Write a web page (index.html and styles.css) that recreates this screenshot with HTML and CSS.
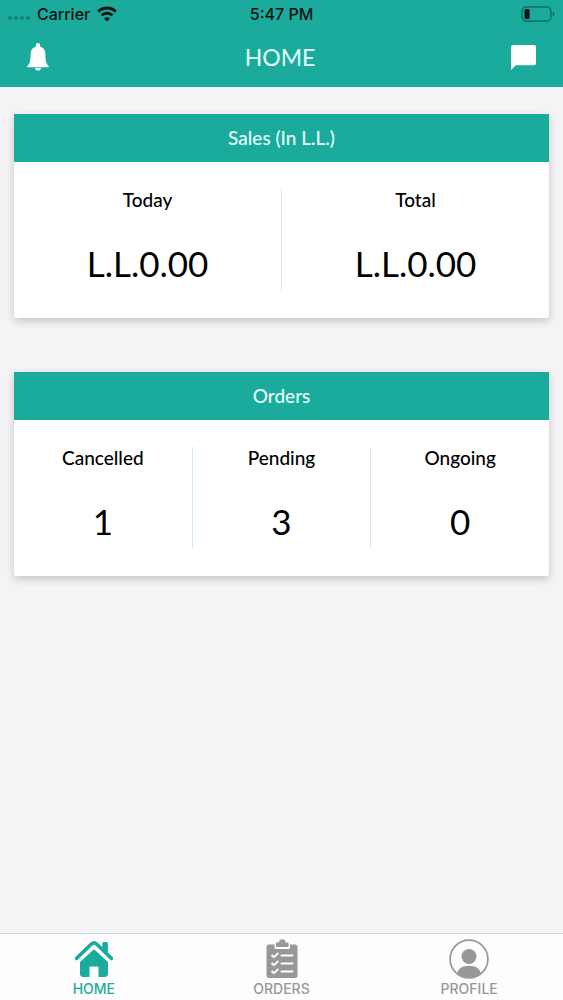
FILE: index.html
```html
<!DOCTYPE html>
<html lang="en">
<head>
    <meta charset="UTF-8">
    <meta name="viewport" content="width=device-width, initial-scale=1.0">
    <title>Home</title>
    <link rel="stylesheet" href="styles.css">
</head>
<body>
    <header class="header">
        <div class="status-bar">
            <div class="status-left">
                <span class="signal"><i></i><i></i><i></i><i></i></span>
                <span>Carrier</span>
                <svg width="20" height="16" viewBox="0 0 20 16" aria-hidden="true">
                    <path d="M1.2 5.6a12.7 12.7 0 0 1 17.6 0" fill="none" stroke="#06120f" stroke-width="3"/>
                    <path d="M4.6 9.3a7.8 7.8 0 0 1 10.8 0" fill="none" stroke="#06120f" stroke-width="2.6"/>
                    <path d="M10 15.6l-2.9-3a4.2 4.2 0 0 1 5.8 0z" fill="#06120f"/>
                </svg>
            </div>
            <span class="time">5:47 PM</span>
            <div class="status-right">
                <svg width="34" height="16" viewBox="0 0 34 16" aria-hidden="true">
                    <rect x="1" y="1" width="29" height="14" rx="4" fill="none" stroke="#0c6d61" stroke-width="1.3"/>
                    <rect x="3.4" y="3" width="5.2" height="10" rx="1.6" fill="#06120f"/>
                    <path d="M31.8 5.4c2 .8 2 4.4 0 5.2z" fill="#0c6d61"/>
                </svg>
            </div>
        </div>
        <div class="nav-bar">
            <button class="icon-button" type="button" aria-label="Notifications">
                <svg width="22" height="28" viewBox="0 0 22 28" aria-hidden="true">
                    <path d="M11 0c1.3 0 2.1.9 2.1 2.1v1.6c3.7 1 5.3 3.9 5.3 7.6 0 6.3.6 9.3 3.2 11.7v1.2H.4V23C3 20.6 3.6 17.6 3.6 11.3c0-3.7 1.6-6.6 5.3-7.6V2.1C8.9.9 9.7 0 11 0z" fill="#fff"/>
                    <path d="M7.9 25h6.2c-.3 1.7-1.5 2.6-3.1 2.6S8.2 26.7 7.9 25z" fill="#fff"/>
                </svg>
            </button>
            <h1>HOME</h1>
            <button class="icon-button" type="button" aria-label="Messages">
                <svg width="25" height="25" viewBox="0 0 26 26" aria-hidden="true">
                    <path d="M2 0h22a2 2 0 0 1 2 2v17a2 2 0 0 1-2 2H5L0 26V2A2 2 0 0 1 2 0z" fill="#fff"/>
                </svg>
            </button>
        </div>
    </header>

    <main class="content">
        <section class="card">
            <h2>Sales (In L.L.)</h2>
            <div class="stats">
                <div class="stat">
                    <h3>Today</h3>
                    <p>L.L.0.00</p>
                </div>
                <div class="stat">
                    <h3>Total</h3>
                    <p>L.L.0.00</p>
                </div>
            </div>
        </section>

        <section class="card">
            <h2>Orders</h2>
            <div class="stats">
                <div class="stat">
                    <h3>Cancelled</h3>
                    <p>1</p>
                </div>
                <div class="stat">
                    <h3>Pending</h3>
                    <p>3</p>
                </div>
                <div class="stat">
                    <h3>Ongoing</h3>
                    <p>0</p>
                </div>
            </div>
        </section>
    </main>

    <nav class="tab-bar">
        <a class="tab active" href="#home">
            <svg width="40" height="40" viewBox="0 0 40 40" aria-hidden="true">
                <path d="M2.6 19.4L17.4 5q2.600-2.300 5.200 0L37.400 19.400" fill="none" stroke="currentColor" stroke-width="3.600" stroke-linecap="round"/>
                <path d="M28.300 4.600q0-1.600 1.600-1.600h2.400q1.600 0 1.600 1.600V14l-5.600-5z" fill="currentColor"/>
                <path d="M20 10.200L34 23v11.500q0 3.500-3.500 3.500h-6v-9.500q0-1-1-1h-7q-1 0-1 1V38h-6Q6 38 6 34.500V23z" fill="currentColor"/>
            </svg>
            <span>HOME</span>
        </a>
        <a class="tab" href="#orders">
            <svg width="40" height="40" viewBox="0 0 40 40" aria-hidden="true">
                <path d="M7 5.500h5.500v3q0 1.500 1.500 1.500h12.500q1.500 0 1.500-1.500v-3h5q2.500 0 2.500 2.500v28.500q0 2.500-2.500 2.500H7q-2.500 0-2.500-2.500V8q0-2.500 2.500-2.500z" fill="currentColor"/>
                <path d="M14 8V4.500q0-1 1-1h2.100a3.200 3.200 0 0 1 6.400 0h2q1 0 1 1V8z" fill="currentColor"/>
                <path d="M9.500 16l2.400 2.200 4.400-4.200M9.500 24l2.400 2.200 4.400-4.200M9.500 32l2.400 2.200 4.400-4.200" fill="none" stroke="#fff" stroke-width="2"/>
                <path d="M19.500 16.500h11M19.500 24.500h11M19.500 32.500h11" stroke="#fff" stroke-width="1.800" stroke-linecap="round"/>
            </svg>
            <span>ORDERS</span>
        </a>
        <a class="tab" href="#profile">
            <svg width="40" height="40" viewBox="0 0 40 40" aria-hidden="true">
                <circle cx="20" cy="20" r="18.900" fill="none" stroke="currentColor" stroke-width="1.700"/>
                <circle cx="20" cy="17.500" r="7.500" fill="currentColor"/>
                <path d="M8.200 34.500C9 29.500 13.500 26.800 20 26.800s11 2.700 11.800 7.700Q26.500 39 20 39T8.200 34.500z" fill="currentColor"/>
            </svg>
            <span>PROFILE</span>
        </a>
    </nav>
</body>
</html>
```
FILE: styles.css
```css
* {
    box-sizing: border-box;
}
body {
    display: flex;
    flex-direction: column;
    min-height: 100vh;
    margin: 0;
    font-family: Lato, sans-serif;
    background-color: #f4f3f5;
    color: #000;
}
h1,
h2,
h3,
p {
    margin: 0;
}
.header {
    background-color: #1aab9d;
    padding-bottom: 4px;
}
.status-bar {
    display: grid;
    grid-template-columns: 1fr auto 1fr;
    align-items: center;
    height: 27px;
    padding: 0 8px;
    font-family: Inter, sans-serif;
    font-size: 16px;
    font-weight: 500;
    color: #06120f;
}
.status-left {
    display: flex;
    align-items: center;
    gap: 7px;
}
.status-right {
    display: flex;
    justify-content: flex-end;
}
.signal {
    display: flex;
    gap: 2px;
    padding-top: 9px;
}
.signal i {
    width: 4px;
    height: 4px;
    border-radius: 50%;
    background-color: #138277;
}
.nav-bar {
    display: flex;
    align-items: center;
    justify-content: space-between;
    height: 56px;
    padding: 4px 27px 0;
}
.nav-bar h1 {
    font-size: 23px;
    font-weight: 400;
    line-height: 28px;
    color: #e6fffb;
}
.icon-button {
    display: flex;
    align-items: center;
    height: 28px;
    padding: 0;
    border: none;
    background: none;
    cursor: pointer;
}
.content {
    flex: 1;
    display: flex;
    flex-direction: column;
    gap: 54px;
    padding: 27px 14px;
}
.card {
    background-color: #fff;
    border-radius: 2px;
    box-shadow: 0 3px 8px rgba(0, 0, 0, 0.2);
}
.card h2 {
    font-size: 19px;
    font-weight: 500;
    line-height: 48px;
    text-align: center;
    color: #e6fffb;
    background-color: #1aab9d;
}
.stats {
    display: flex;
    padding: 27px 0;
}
.stat {
    flex: 1;
    height: 102px;
    text-align: center;
}
.stat + .stat {
    border-left: 1px solid #d0e8f2;
}
.stat h3 {
    font-size: 19px;
    font-weight: 500;
    line-height: 22px;
}
.stat p {
    margin-top: 30px;
    font-size: 35px;
    line-height: 44px;
}
.tab-bar {
    display: flex;
    height: 67px;
    border-top: 1px solid #d6d5d8;
    background-color: #fdfdfe;
}
.tab {
    flex: 1;
    display: flex;
    flex-direction: column;
    align-items: center;
    padding-top: 5px;
    font-family: Inter, sans-serif;
    font-size: 14px;
    font-weight: 500;
    line-height: 20px;
    color: #98979a;
    text-decoration: none;
}
.tab.active {
    color: #1aab9d;
}
```
